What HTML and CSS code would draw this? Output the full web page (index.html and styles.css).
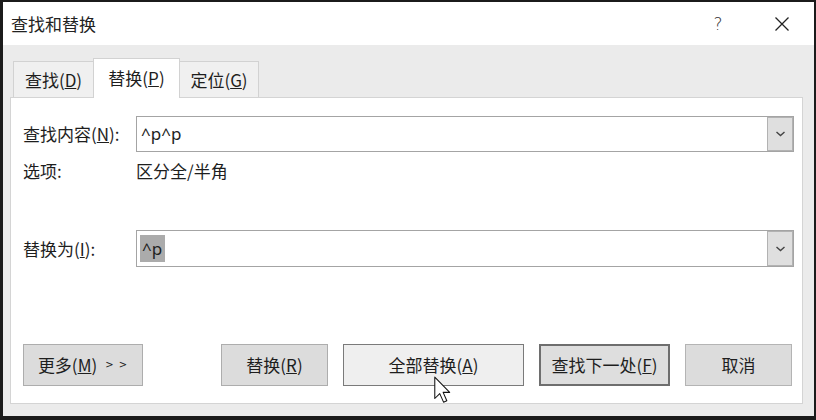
FILE: index.html
```html
<!DOCTYPE html>
<html lang="zh-CN">
<head>
<meta charset="utf-8">
<title>查找和替换</title>
<link rel="stylesheet" href="styles.css">
</head>
<body>
<div class="screen">
  <div class="window">
    <div class="titlebar">
      <span class="title">查找和替换</span>
      <span class="help">?</span>
      <span class="close">
        <svg width="14" height="14" viewBox="0 0 14 14"><path d="M0.5 0.5 L13.5 13.5 M13.5 0.5 L0.5 13.5" stroke="#222" stroke-width="1.3" fill="none"/></svg>
      </span>
    </div>
    <div class="body">
      <div class="tabs">
        <div class="tab t1">查找(<u>D</u>)</div>
        <div class="tab t2 active">替换(<u>P</u>)</div>
        <div class="tab t3">定位(<u>G</u>)</div>
      </div>
      <div class="panel">
        <div class="row find">
          <span class="label">查找内容(<u>N</u>):</span>
          <div class="combo">
            <div class="combo-text">^p^p</div>
            <div class="combo-btn">
              <svg width="9" height="6" viewBox="0 0 9 6"><path d="M0.5 1 L4.5 4.5 L8.5 1" stroke="#444" stroke-width="1.4" fill="none"/></svg>
            </div>
          </div>
        </div>
        <div class="row options">
          <span class="label">选项:</span>
          <span class="value">区分全/半角</span>
        </div>
        <div class="row replace">
          <span class="label">替换为(<u>I</u>):</span>
          <div class="combo tall">
            <div class="combo-text"><span class="sel">^p</span></div>
            <div class="combo-btn">
              <svg width="9" height="6" viewBox="0 0 9 6"><path d="M0.5 1 L4.5 4.5 L8.5 1" stroke="#444" stroke-width="1.4" fill="none"/></svg>
            </div>
          </div>
        </div>
        <div class="buttons">
          <button class="btn more">更多(<u>M</u>) <span class="chev">&gt; &gt;</span></button>
          <button class="btn replace-one">替换(<u>R</u>)</button>
          <button class="btn hover all">全部替换(<u>A</u>)</button>
          <button class="btn default next">查找下一处(<u>F</u>)</button>
          <button class="btn cancel">取消</button>
        </div>
      </div>
    </div>
  </div>
  <svg class="cursor" width="17" height="28" viewBox="0 0 13 21">
    <path d="M0.6 0.6 V17 L4.4 13.3 L7.3 19.8 L9.8 18.7 L7 12.3 H12 Z" fill="#fff" stroke="#111" stroke-width="0.8" stroke-linejoin="round"/>
  </svg>
</div>
</body>
</html>
```

FILE: styles.css
```css
html, body {
  margin: 0;
  padding: 0;
}
body {
  font-family: "Noto Sans CJK SC", "Noto Sans", sans-serif;
  color: #1e1e1e;
}
.screen {
  position: relative;
  width: 816px;
  height: 420px;
  background: #1b1b1b;
  padding: 2px 2px 4px 3px;
  box-sizing: border-box;
}
.window {
  height: 100%;
  display: flex;
  flex-direction: column;
  background: #ebebeb;
}
.titlebar {
  height: 43px;
  flex: none;
  background: #ffffff;
  display: flex;
  align-items: center;
  padding: 0 25px 0 8px;
}
.title {
  font-size: 17px;
  line-height: 20px;
  color: #222;
}
.help {
  margin-left: auto;
  width: 10px;
  text-align: center;
  font-family: "DejaVu Sans", sans-serif;
  font-size: 17px;
  font-weight: 300;
  line-height: 20px;
  color: #333;
  margin-top: 1px;
}
.close {
  margin-left: 52px;
  width: 14px;
  height: 14px;
  display: flex;
}
.body {
  flex: 1;
  display: flex;
  flex-direction: column;
  padding: 13px 11px 12px 7px;
}
.tabs {
  display: flex;
  align-items: flex-end;
  height: 40px;
  margin: 0 0 -1px 3px;
}
.tab {
  height: 36px;
  box-sizing: border-box;
  margin-bottom: 1px;
  border: 1px solid #d2d2d2;
  border-bottom: none;
  background: #f0f0f0;
  display: flex;
  align-items: center;
  justify-content: center;
  font-size: 17px;
  line-height: 20px;
}
.t1 { width: 80px; border-right: none; }
.t2 { width: 87px; }
.t3 { width: 79px; border-left: none; }
.tab.active {
  height: 40px;
  margin-bottom: 0;
  background: #ffffff;
  position: relative;
  z-index: 1;
  padding-bottom: 2px;
}
.panel {
  flex: 1;
  display: flex;
  flex-direction: column;
  background: #ffffff;
  border: 1px solid #d4d4d4;
  padding: 18px 8px 17px 12px;
}
.row {
  display: grid;
  grid-template-columns: 113px 1fr;
  align-items: center;
  font-size: 17px;
  line-height: 20px;
}
.options {
  height: 24px;
  margin-top: 7px;
}
.replace {
  margin-top: 47px;
}
.combo {
  height: 36px;
  box-sizing: border-box;
  border: 1px solid #a4a4a4;
  display: flex;
  background: #fff;
}
.combo.tall {
  height: 37px;
}
.combo-text {
  flex: 1;
  display: flex;
  align-items: center;
  padding-left: 4px;
  font-family: "Noto Sans", sans-serif;
  font-size: 17px;
  color: #222;
}
.sel {
  background: #ababab;
  line-height: 27px;
  padding: 0 3px 0 2px;
  margin-left: -1px;
}
.combo-btn {
  width: 26px;
  box-sizing: border-box;
  border: 1px solid #b2b2b2;
  background: #dfdfdf;
  display: flex;
  align-items: center;
  justify-content: center;
}
.buttons {
  margin-top: auto;
  display: flex;
  gap: 15px;
  padding-right: 2px;
  height: 42px;
}
.btn {
  height: 42px;
  box-sizing: border-box;
  border: 1px solid #adadad;
  background: #dcdcdc;
  font-family: "Noto Sans CJK SC", "Noto Sans", sans-serif;
  font-size: 17px;
  line-height: 20px;
  color: #1e1e1e;
  padding: 0;
  display: flex;
  align-items: center;
  justify-content: center;
}
.more { width: 120px; }
.chev {
  font-family: "DejaVu Sans", sans-serif;
  font-size: 10px;
  margin-left: 8px;
  letter-spacing: 1px;
}
.replace-one { width: 107px; margin-left: auto; }
.all {
  width: 181px;
  background: #efefef;
  border-color: #7a7a7a;
}
.next {
  width: 131px;
  border: 2px solid #6e6e6e;
  background: #dedede;
}
.cancel {
  width: 107px;
  border-color: #b4b4b4;
}
.cursor {
  position: absolute;
  left: 434px;
  top: 376px;
}
```
